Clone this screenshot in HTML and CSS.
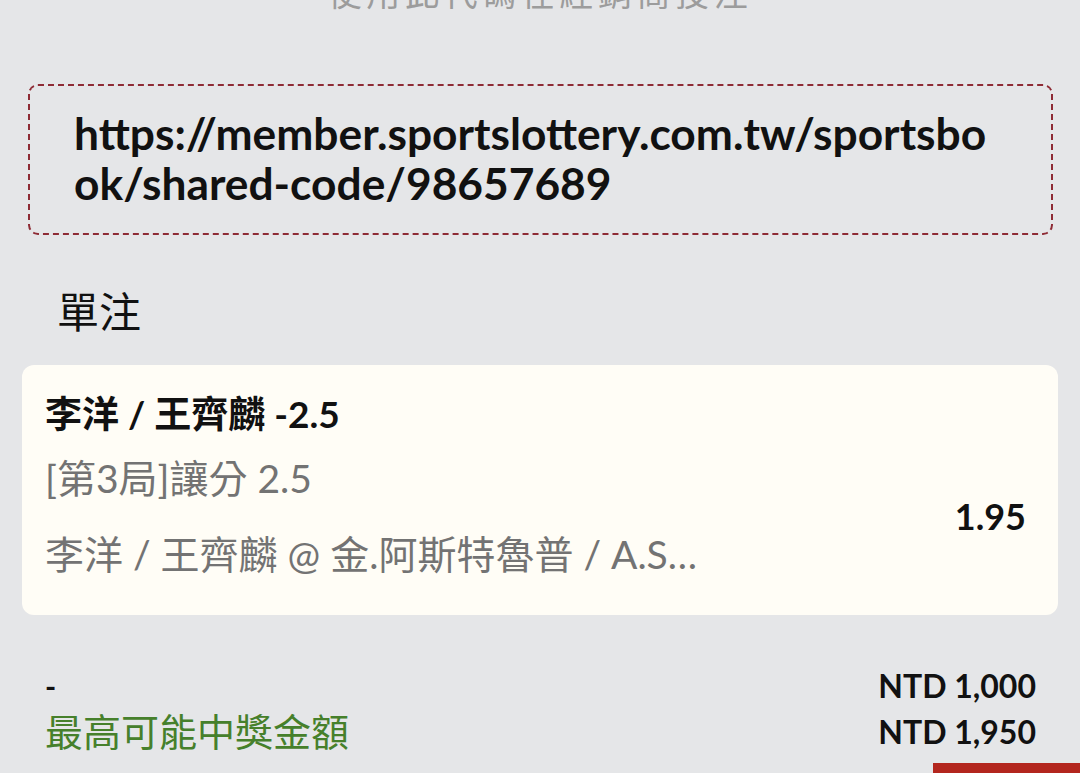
FILE: index.html
```html
<!DOCTYPE html>
<html lang="zh-Hant">
<head>
<meta charset="utf-8">
<link rel="stylesheet" href="styles.css">
</head>
<body>
<div class="page">
  <div class="hint">使用此代碼在經銷商投注</div>
  <div class="code-box">https://member.sportslottery.com.tw/sportsbook/shared-code/98657689</div>
  <div class="section-title">單注</div>
  <div class="bet-card">
    <div class="bet-info">
      <div class="bet-title">李洋 / 王齊麟 -2.5</div>
      <div class="bet-market">[第3局]讓分 2.5</div>
      <div class="bet-event">李洋 / 王齊麟 @ 金.阿斯特魯普 / A.S拉斯姆森</div>
    </div>
    <div class="bet-odds">1.95</div>
  </div>
  <div class="summary">
    <div class="summary-row">
      <span class="dash">-</span>
      <span class="amount">NTD 1,000</span>
    </div>
    <div class="summary-row">
      <span class="win-label">最高可能中獎金額</span>
      <span class="amount">NTD 1,950</span>
    </div>
  </div>
  <div class="bottom-bar"><div class="red-btn"></div></div>
</div>
</body>
</html>
```
FILE: styles.css
```css
html, body {
  margin: 0;
  padding: 0;
  background: #e5e6e8;
  height: 773px;
  overflow: hidden;
}
.page {
  font-family: "Lato", "Noto Sans CJK TC", sans-serif;
  color: #111;
  display: flex;
  flex-direction: column;
}
.hint {
  margin-top: -28px;
  text-align: center;
  color: #9c9c9c;
  font-family: "Noto Sans CJK TC", sans-serif;
  font-size: 34px;
  line-height: 40px;
  letter-spacing: 4.6px;
}
.code-box {
  margin: 72px 27px 0 28px;
  border: 2px dashed #8e2b35;
  border-radius: 10px;
  padding: 22px 50px 25px 44px;
  font-weight: 700;
  font-size: 44.3px;
  line-height: 50px;
  word-break: break-all;
  color: #111;
}
.section-title {
  font-family: "Noto Sans CJK TC", sans-serif;
  font-size: 42px;
  line-height: 60px;
  margin: 45px 0 0 57px;
  color: #111;
}
.bet-card {
  margin: 25px 22px 0 22px;
  background: #fffdf6;
  border-radius: 12px;
  height: 250px;
  box-sizing: border-box;
  padding: 24px 32px 0 23px;
  display: flex;
  align-items: center;
  justify-content: space-between;
}
.bet-info {
  display: flex;
  flex-direction: column;
  align-self: flex-start;
  min-width: 0;
}
.bet-title {
  font-family: "Lato", "Noto Sans CJK TC", sans-serif;
  font-weight: 700;
  font-size: 37px;
  line-height: 50px;
  color: #111;
}
.bet-market, .bet-event {
  font-family: "Lato", "Noto Sans CJK TC", sans-serif;
  font-size: 39px;
  color: #737373;
  line-height: 50px;
}
.bet-market { margin-top: 14px; }
.bet-event {
  margin-top: 26px;
  max-width: 660px;
  white-space: nowrap;
  overflow: hidden;
  text-overflow: ellipsis;
}
.bet-odds {
  font-weight: 700;
  font-size: 36px;
  color: #111;
  padding-top: 28px;
}
.summary {
  margin: 50px 44px 0 45px;
  display: flex;
  flex-direction: column;
}
.summary-row {
  display: flex;
  justify-content: space-between;
  align-items: flex-end;
}
.dash {
  font-weight: 700;
  font-size: 30px;
  line-height: 42px;
}
.amount {
  font-weight: 700;
  font-size: 32px;
  line-height: 42px;
  color: #111;
}
.win-label {
  font-family: "Noto Sans CJK TC", sans-serif;
  color: #46802b;
  font-size: 38px;
  line-height: 46px;
}
.bottom-bar {
  display: flex;
  justify-content: flex-end;
  margin-top: 10px;
}
.red-btn {
  width: 147px;
  height: 40px;
  background: #b3261e;
}
```
